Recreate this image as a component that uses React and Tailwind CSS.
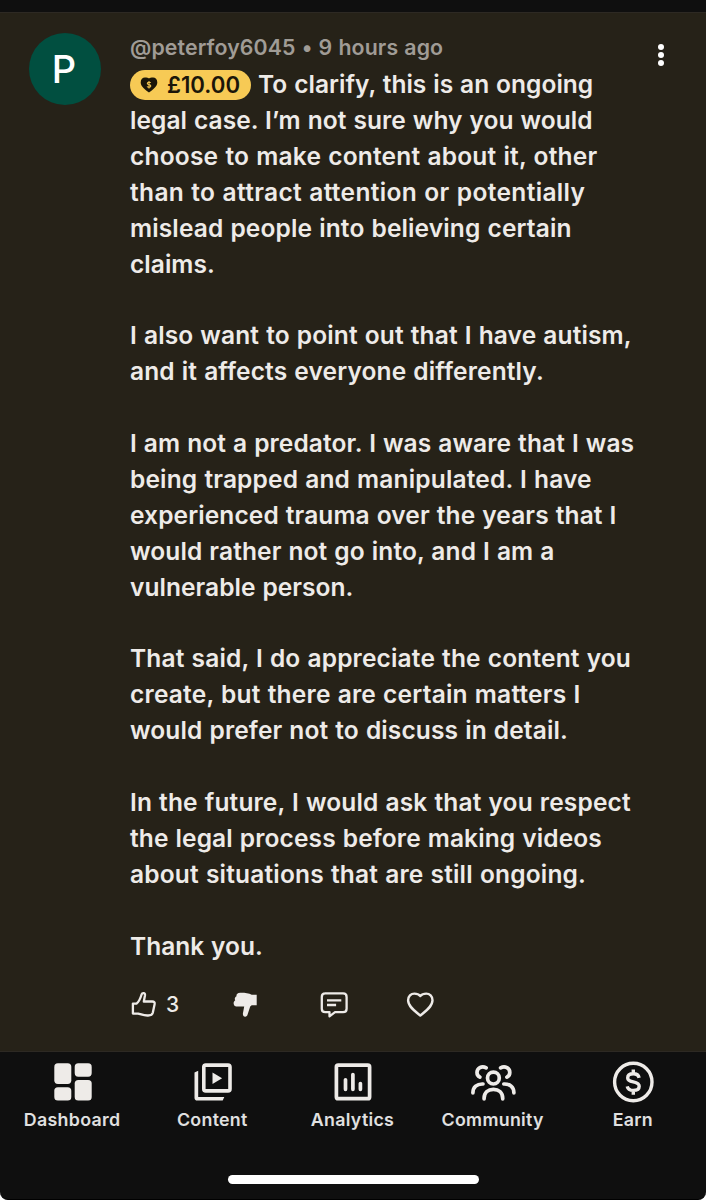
const paragraphs = [
  [
    { text: 'To clarify, this is an ongoing', tracking: 'tracking-[0.03px]' },
    { text: 'legal case. I’m not sure why you would', tracking: 'tracking-[0.07px]' },
    { text: 'choose to make content about it, other', tracking: 'tracking-[0.21px]' },
    { text: 'than to attract attention or potentially', tracking: 'tracking-[0.34px]' },
    { text: 'mislead people into believing certain', tracking: 'tracking-[0.14px]' },
    { text: 'claims.', tracking: 'tracking-[0.05px]' }
  ],
  [
    { text: 'I also want to point out that I have autism,', tracking: 'tracking-[0.14px]' },
    { text: 'and it affects everyone differently.', tracking: 'tracking-[0.14px]' }
  ],
  [
    { text: 'I am not a predator. I was aware that I was', tracking: 'tracking-[0.1px]' },
    { text: 'being trapped and manipulated. I have', tracking: 'tracking-[0.17px]' },
    { text: 'experienced trauma over the years that I', tracking: 'tracking-[0.11px]' },
    { text: 'would rather not go into, and I am a', tracking: 'tracking-[0.11px]' },
    { text: 'vulnerable person.', tracking: 'tracking-[0.05px]' }
  ],
  [
    { text: 'That said, I do appreciate the content you', tracking: 'tracking-[0.16px]' },
    { text: 'create, but there are certain matters I', tracking: 'tracking-[0.21px]' },
    { text: 'would prefer not to discuss in detail.', tracking: 'tracking-[0.13px]' }
  ],
  [
    { text: 'In the future, I would ask that you respect', tracking: 'tracking-[0.15px]' },
    { text: 'the legal process before making videos', tracking: 'tracking-[0.12px]' },
    { text: 'about situations that are still ongoing.', tracking: 'tracking-[0.19px]' }
  ],
  [{ text: 'Thank you.', tracking: 'tracking-[0px]' }]
]

const ThumbUpIcon = () => (
  <svg width="28" height="28" viewBox="0 0 28 28" fill="none" stroke="currentColor" strokeWidth="2.3" strokeLinejoin="round">
    <path d="M2.9 13.6H6.5C9.8 11 10.8 7 11.6 4.4C12.2 2.5 15.4 2.5 15 5.2L13.8 11.5H22.2C24.3 11.5 25 12.8 24.6 14.2L22.8 22.8C22.2 25.2 19.5 25.6 17.5 25.5C13.5 25.4 11 24.3 8.2 23.6H2.9Z" />
  </svg>
)

const ThumbDownIcon = () => (
  <svg width="28" height="28" viewBox="0 0 28 28" fill="currentColor">
    <path d="M25.7 4.8H20.7C17.7 3.3 13.7 2.7 9.2 2.8C6.2 2.9 5.2 4.5 5.5 6.2C3.7 7.2 3.4 9 4.2 10.3C2.3 11.7 2.3 14 3.2 15.2C3.8 16.2 5 16.5 6.2 16.5H13.2L11.9 23.5C11.7 25.5 12.7 26.8 14.2 26.7C15.5 26.6 16.2 25.8 16.6 24.5L19.2 16.5L20.7 15.3H25.7Z" />
  </svg>
)

const ReplyIcon = () => (
  <svg width="30" height="28" viewBox="0 0 30 28" fill="none" stroke="currentColor" strokeWidth="2.3" strokeLinejoin="round">
    <path d="M6 3.4H24.1Q27.6 3.4 27.6 6.9V18.7Q27.6 22.2 24.1 22.2H16L10.5 26.3V22.2H6.2Q2.8 22.2 2.8 18.7V6.9Q2.8 3.4 6.2 3.4Z" />
    <path d="M8 10.3H22.3M8 15H17.1" />
  </svg>
)

const HeartIcon = () => (
  <svg width="30" height="28" viewBox="0 0 30 28" fill="none" stroke="currentColor" strokeWidth="2.4" strokeLinejoin="round">
    <path d="M15.3 25.6C10 21.3 3.1 16.5 3.1 10.3C3.1 6.3 6 3.6 9.4 3.6C12 3.6 14 4.4 15.3 6C16.6 4.4 18.6 3.6 21.2 3.6C24.6 3.6 27.5 6.3 27.5 10.3C27.5 16.5 20.6 21.3 15.3 25.6Z" />
  </svg>
)

const SuperThanksIcon = () => (
  <svg width="18" height="16" viewBox="0 0 18 16">
    <path d="M9 15.6C5.5 12.6 0.7 9.8 0.7 5.4C0.7 2.6 2.6 0.6 5 0.6C6.8 0.6 8.2 0.9 9 1.6C9.8 0.9 11.2 0.6 13 0.6C15.4 0.6 17.3 2.6 17.3 5.4C17.3 9.8 12.5 12.6 9 15.6Z" fill="#1b1609" />
    <path d="M10.8 5.7C10.2 5 7.3 4.9 7.3 6.4C7.3 8.2 10.8 7.1 10.8 9C10.8 10.5 7.8 10.4 7 9.5M9 4V11.4" fill="none" stroke="#f5c64f" strokeWidth="1.1" />
  </svg>
)

const DashboardIcon = () => (
  <svg width="44" height="44" viewBox="0 0 44 44" fill="currentColor">
    <rect x="4.3" y="3.3" width="17" height="20.6" rx="3.6" />
    <rect x="24.7" y="3.3" width="17" height="13.4" rx="3.6" />
    <rect x="4.3" y="27.2" width="17" height="13.4" rx="3.6" />
    <rect x="24.7" y="20" width="17" height="20.6" rx="3.6" />
  </svg>
)

const ContentIcon = () => (
  <svg width="44" height="44" viewBox="0 0 44 44" fill="none" stroke="currentColor" strokeWidth="3.6">
    <rect x="13.8" y="5.1" width="26.2" height="25.8" rx="2" />
    <path d="M22.5 12.6V24L32.1 18.3Z" fill="currentColor" stroke="none" />
    <path d="M4.5 12.6L8.2 10.8V37H34.3L32.7 40.6H7.3Q4.5 40.6 4.5 37.8Z" fill="currentColor" stroke="none" />
  </svg>
)

const AnalyticsIcon = () => (
  <svg width="44" height="44" viewBox="0 0 44 44" fill="none" stroke="currentColor" strokeWidth="3.7">
    <rect x="6.4" y="5.1" width="33.2" height="33.6" rx="1.8" />
    <path d="M15.5 19.8V29.3M22.9 14.6V29.3M30.4 23.6V29.3" strokeLinecap="round" />
  </svg>
)

const CommunityIcon = () => (
  <svg width="48" height="44" viewBox="0 0 48 44" fill="none" stroke="currentColor" strokeWidth="3.7" strokeLinecap="round">
    <circle cx="24.4" cy="18.1" r="5.9" />
    <path d="M15.1 38.8V38.3C15.1 32.5 19.2 29.3 24.4 29.3S33.7 32.5 33.7 38.3V38.8" />
    <path d="M17.2 7.8C12.6 5.2 8 8.3 8 12.4C8 14.8 9.3 16.3 10.9 17.1" />
    <path d="M31.6 7.8C36.2 5.2 40.8 8.3 40.8 12.4C40.8 14.8 39.5 16.3 37.9 17.1" />
    <path d="M3.9 32.8C3.9 27 7.9 23.7 14 24" />
    <path d="M44.9 32.8C44.9 27 40.9 23.7 34.8 24" />
  </svg>
)

const EarnIcon = () => (
  <svg width="44" height="44" viewBox="0 0 44 44" fill="none" stroke="currentColor" strokeWidth="3.4">
    <circle cx="22.3" cy="22" r="18.7" />
    <path d="M28.1 17.9C27.5 14.8 25.1 13.8 22.3 13.8C19 13.8 16.7 15.3 16.7 17.9C16.7 20.7 19.5 21.3 22.3 21.9C25.5 22.6 28.2 23.4 28.2 26.2C28.2 29 25.6 30.4 22.3 30.4C19.2 30.4 16.9 29.2 16.2 26.3M22.3 9.6V14M22.3 30.3V34.8" />
  </svg>
)

const tabs = [
  { label: 'Dashboard', Icon: DashboardIcon },
  { label: 'Content', Icon: ContentIcon },
  { label: 'Analytics', Icon: AnalyticsIcon },
  { label: 'Community', Icon: CommunityIcon },
  { label: 'Earn', Icon: EarnIcon }
]

const App = () => {
  return (
    <div className="bg-white w-[706px] h-[1200px]">
      <div className="flex flex-col h-full bg-[#0f0f0f] rounded-b-lg overflow-hidden border-b border-black font-['Inter','Liberation_Sans',sans-serif] font-medium text-[#eeebe8]">
        <div className="h-3 shrink-0" />

        {/* comment */}
        <main className="flex h-[1040px] shrink-0 bg-[#262218] border-y border-[#2d2923]">
          <div className="w-[130px] shrink-0 pl-[29px] pt-5">
            <div className="flex items-center justify-center size-[72px] pr-0.5 pt-px rounded-full bg-[#014f40] text-white text-[38px]">
              P
            </div>
          </div>

          <div className="w-[515px] shrink-0 pt-[17px] whitespace-nowrap">
            <div className="h-9 leading-[34px] text-[21.3px] tracking-[0.12px] [word-spacing:0.6px] font-semibold text-[#a09c96]">
              @peterfoy6045 • 9 hours ago
            </div>

            <div className="flex flex-col gap-[35.9px] pt-px text-[24.5px] font-semibold leading-[35.92px] [word-spacing:0.7px]">
              {paragraphs.map((lines, i) => (
                <div key={i}>
                  {lines.map((line, j) => (
                    <div key={line.text} className={`flex items-center h-[35.92px] ${line.tracking}`}>
                      {i === 0 && j === 0 && (
                        <span className="flex items-center gap-[9px] w-[121px] h-[30px] pl-2.5 mr-[7px] rounded-full bg-[#f7ca55] text-[#1b1609] text-[22.2px] tracking-normal">
                          <SuperThanksIcon />
                          £10.00
                        </span>
                      )}
                      {line.text}
                    </div>
                  ))}
                </div>
              ))}
            </div>

            <div className="flex items-center h-7 mt-[25px]">
              <div className="flex items-center gap-2 w-[101px]">
                <ThumbUpIcon />
                <span className="pt-0.5 text-[21px]">3</span>
              </div>
              <div className="w-[88px]"><ThumbDownIcon /></div>
              <div className="w-[86px]"><ReplyIcon /></div>
              <HeartIcon />
            </div>
          </div>

          <div className="flex flex-col items-center w-8 pt-[31px] gap-[2.2px]">
            <span className="size-[5.8px] rounded-full bg-white" />
            <span className="size-[5.8px] rounded-full bg-white" />
            <span className="size-[5.8px] rounded-full bg-white" />
          </div>
        </main>

        {/* bottom tabs */}
        <nav className="grid grid-cols-5 w-[701px] ml-0.5 pt-2">
          {tabs.map(({ label, Icon }) => (
            <div key={label} className="flex flex-col items-center">
              <Icon />
              <span className="mt-0.5 text-[17.8px] leading-7 tracking-[0.3px] font-semibold text-[#e0e0e0]">{label}</span>
            </div>
          ))}
        </nav>
        <div className="mx-auto mt-[41px] w-[251px] h-[9px] shrink-0 rounded-full bg-white" />
      </div>
    </div>
  )
}

export default App
